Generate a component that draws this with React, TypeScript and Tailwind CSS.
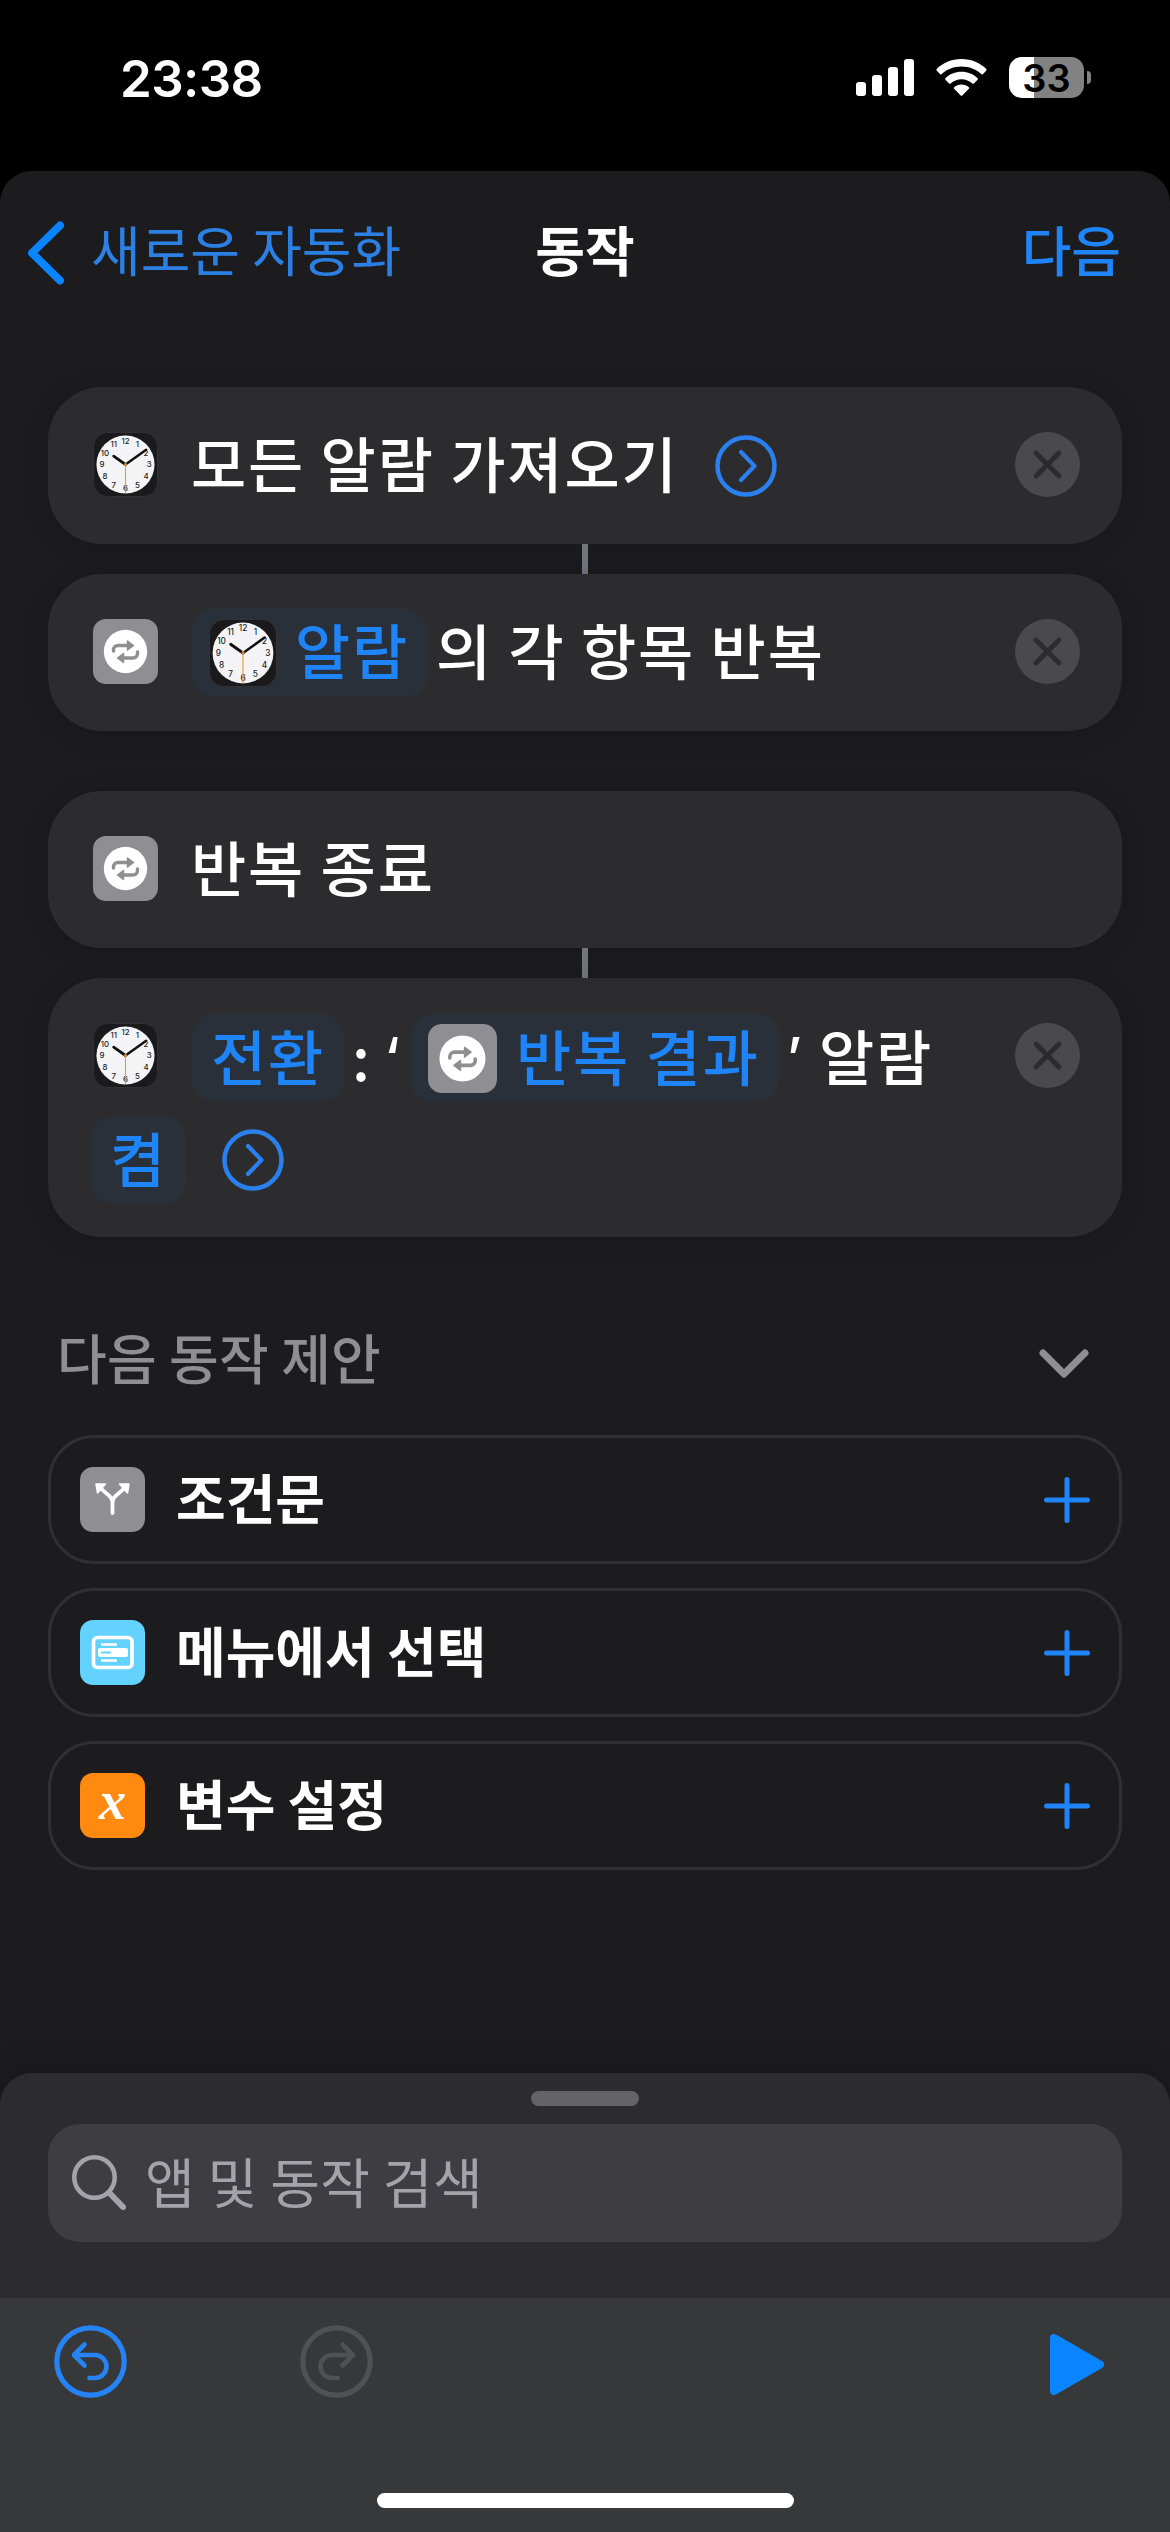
import type { ReactNode } from 'react'

const ClockIcon = ({ className }: { className: string }) => (
  <svg viewBox="0 0 66 66" className={className}>
    <rect x="0.5" y="0.5" width="65" height="65" rx="14" fill="#1a1a1c" stroke="#333335" />
    <circle cx="33" cy="33" r="29.5" fill="#f4f4f6" />
    {[12, 1, 2, 3, 4, 5, 6, 7, 8, 9, 10, 11].map((hour) => {
      const angle = (hour * Math.PI) / 6
      return (
        <text
          key={hour}
          x={33 + Math.sin(angle) * 24}
          y={33 - Math.cos(angle) * 24 + 2.9}
          fontSize="8"
          fontWeight="500"
          textAnchor="middle"
          letterSpacing="0"
          fill="#1c1c1e"
          fontFamily="Inter, sans-serif"
        >
          {hour}
        </text>
      )
    })}
    <path d="M33 33 L21 24.5" stroke="#111" strokeWidth="2.8" strokeLinecap="round" />
    <path d="M33 33 L54 18" stroke="#111" strokeWidth="2.5" strokeLinecap="round" />
    <path d="M33 31 V62" stroke="#f0992e" strokeWidth="1.1" />
    <circle cx="33" cy="33" r="1.6" fill="#c98a3a" />
  </svg>
)

const RepeatIcon = ({ className }: { className: string }) => (
  <svg viewBox="0 0 65 65" className={className}>
    <rect width="65" height="65" rx="13" fill="#8e8e93" />
    <circle cx="32.5" cy="32.5" r="21.7" fill="#fff" />
    <g fill="none" stroke="#8e8e93" strokeWidth="3.4" strokeLinecap="round" strokeLinejoin="round">
      <path d="M20.500 32 V31 a4.500 4.500 0 0 1 4.500 -4.500 H35" />
      <path d="M44.500 33 V34.500 a4.500 4.500 0 0 1 -4.500 4.500 H30" />
    </g>
    <path d="M34.500 22 L40.500 26.500 L34.500 31 Z" fill="#8e8e93" stroke="#8e8e93" strokeWidth="1.5" strokeLinejoin="round" />
    <path d="M30.500 34.500 L24.500 39 L30.500 43.500 Z" fill="#8e8e93" stroke="#8e8e93" strokeWidth="1.5" strokeLinejoin="round" />
  </svg>
)

const BranchIcon = () => (
  <svg viewBox="0 0 65 65" className="size-[65px]">
    <rect width="65" height="65" rx="13" fill="#8e8e93" />
    <path d="M32.500 46 V36 C32.500 29 27 28 21 21.500 M32.500 36 C32.500 29 38 28 44 21.500" fill="none" stroke="#fff" strokeWidth="3.800" strokeLinecap="round" />
    <path d="M16 17 L25.500 17 L17.500 26 Z M49 17 L39.500 17 L47.500 26 Z" fill="#fff" stroke="#fff" strokeWidth="1.5" strokeLinejoin="round" />
  </svg>
)

const MenuIcon = () => (
  <svg viewBox="0 0 65 65" className="size-[65px]">
    <rect width="65" height="65" rx="13" fill="#64d2ff" />
    <rect x="13.5" y="17.5" width="38.5" height="30" rx="4" fill="none" stroke="#fff" strokeWidth="3.6" />
    <path d="M22 24.500 H36 M22 40.500 H36" stroke="#fff" strokeWidth="2.4" strokeLinecap="round" />
    <rect x="18" y="28" width="30" height="9" rx="2" fill="#fff" />
    <path d="M22 32.500 H30" stroke="#64d2ff" strokeWidth="2" strokeLinecap="round" />
  </svg>
)

const VariableIcon = () => (
  <div className="flex size-[65px] items-center justify-center rounded-[13px] bg-[#ff8a0f]">
    <span className="-mt-[9px] font-['Liberation_Serif',serif] text-[54px] leading-none font-bold text-white italic">x</span>
  </div>
)

const DisclosureIcon = ({ className }: { className: string }) => (
  <svg viewBox="0 0 62 62" className={`size-[62px] ${className}`} fill="none" stroke="#2a80ee" strokeLinecap="round" strokeLinejoin="round">
    <circle cx="31" cy="31" r="28.5" strokeWidth="4.5" />
    <path d="M26 17 L39.500 31 L26 45" strokeWidth="4.2" />
  </svg>
)

const DeleteButton = () => (
  <svg viewBox="0 0 65 65" className="size-[65px] shrink-0">
    <circle cx="32.5" cy="32.5" r="32.5" fill="#4a4a4e" />
    <path d="M21 21 L44 44 M44 21 L21 44" stroke="#2c2c2e" strokeWidth="4.8" strokeLinecap="round" />
  </svg>
)

const Connector = () => <div className="mx-auto h-[30px] w-[6px] bg-[#747480]" />

// Line boxes sit low for hangul, the bottom padding pulls the glyphs back to the row's centre
const Label = ({ children, className = '' }: { children: ReactNode; className?: string }) => (
  <span className={`pb-[7px] font-medium ${className}`}>{children}</span>
)

const Quote = ({ children }: { children: ReactNode }) => (
  <span className="flex w-[30px] justify-center font-[Inter,sans-serif] text-[56px] font-medium tracking-normal">{children}</span>
)

const Token = ({ children, className = '' }: { children: ReactNode; className?: string }) => (
  <span className={`flex h-[88px] items-center rounded-[22px] bg-[#29303a] text-[#1f84f8] ${className}`}>
    {children}
  </span>
)

const Card = ({ children, className = '' }: { children: ReactNode; className?: string }) => (
  <div className={`rounded-[54px] bg-[#2c2c2e] pr-[42px] pl-[45px] text-[60px] leading-none tracking-[1.9px] shadow-[0_4px_24px_rgba(0,0,0,0.15)] ${className}`}>
    {children}
  </div>
)

const suggestions = [
  { label: '조건문', icon: <BranchIcon /> },
  { label: '메뉴에서 선택', icon: <MenuIcon /> },
  { label: '변수 설정', icon: <VariableIcon /> },
]

function StatusBar() {
  return (
    <div className="flex h-[171px] items-start pt-[57px] font-[Inter,sans-serif]">
      <div className="ml-[120px] flex h-[43px] w-[150px] items-center text-[51px] leading-none font-semibold tracking-[-0.6px]">23:38</div>
      <svg viewBox="0 0 58 38" className="mt-[2px] ml-[586px] h-[38px] w-[58px]" fill="#fff">
        <rect x="0" y="23" width="10" height="14" rx="3" />
        <rect x="16" y="16" width="10" height="21" rx="3" />
        <rect x="32" y="8" width="10" height="29" rx="3" />
        <rect x="48" y="0" width="10" height="37" rx="3" />
      </svg>
      <svg viewBox="0 0 51 38" className="mt-[2px] ml-[22px] h-[38px] w-[51px]" fill="#fff">
        <path d="M25.5 0 C35.5 0 44.5 4 50.3 10 Q51 10.900 50.200 11.700 L46.800 15.200 Q46 15.900 45.200 15.100 C40 10.300 33 7.600 25.500 7.600 S11 10.300 5.800 15.100 Q5 15.900 4.200 15.200 L0.800 11.700 Q0 10.900 0.700 10 C6.500 4 15.500 0 25.500 0 Z" />
        <path d="M25.500 12.800 C31.800 12.800 37.500 15.200 41.600 19.200 Q42.400 20 41.600 20.800 L37.900 24.500 Q37.200 25.200 36.400 24.500 C33.500 21.900 29.700 20.300 25.500 20.300 S17.500 21.900 14.600 24.500 Q13.800 25.200 13.100 24.500 L9.400 20.800 Q8.600 20 9.400 19.200 C13.500 15.200 19.200 12.800 25.500 12.800 Z" />
        <path d="M25.500 25.600 C28.300 25.600 30.900 26.600 32.800 28.200 Q33.700 29 32.900 29.800 L26.300 36.600 Q25.500 37.400 24.700 36.600 L18.100 29.800 Q17.300 29 18.200 28.200 C20.100 26.600 22.700 25.600 25.500 25.600 Z" />
      </svg>
      <div className="ml-[22px] flex h-[41px] w-[75px] items-center justify-center rounded-[13px] bg-[linear-gradient(90deg,#fff_33%,#828282_33%)] text-[38px] leading-none font-semibold text-black">
        33
      </div>
      <div className="mt-[14px] ml-[3px] h-[13px] w-[4px] rounded-r-full bg-[#828282]" />
    </div>
  )
}

function NavBar() {
  return (
    <div className="flex h-[162px] items-center justify-between pt-1 text-[54px] leading-none">
      <div className="flex w-[500px] items-center text-[#2c80e4]">
        <svg viewBox="0 0 38 64" className="-mt-[2px] ml-[27px] h-[64px] w-[38px]" fill="none" stroke="#0a84ff" strokeWidth="8" strokeLinecap="round" strokeLinejoin="round">
          <path d="M33 4.500 L5 32 L33 59.500" />
        </svg>
        <span className="ml-[26px] pb-[11px]">새로운 자동화</span>
      </div>
      <span className="pb-[11px] font-bold">동작</span>
      <span className="w-[500px] pr-[49px] pb-[11px] text-right font-medium text-[#1f84f8]">다음</span>
    </div>
  )
}

export default function App() {
  return (
    <div className="flex h-[2532px] w-[1170px] flex-col overflow-hidden bg-black font-['Noto_Sans_CJK_KR',sans-serif] whitespace-nowrap text-white">
      <StatusBar />
      <div className="flex grow flex-col rounded-t-[32px] bg-[#1c1c1e]">
        <NavBar />

        <div className="mx-12 mt-[54px]">
          <Card className="flex h-[157px] items-center">
            <ClockIcon className="-mt-[2px] size-[65px]" />
            <Label className="ml-[33px]">모든 알람 가져오기</Label>
            <DisclosureIcon className="ml-[36px]" />
            <div className="-mt-[2px] ml-auto">
              <DeleteButton />
            </div>
          </Card>
          <Connector />
          <Card className="flex h-[157px] items-center">
            <RepeatIcon className="-mt-[2px] size-[65px]" />
            <Token className="ml-[34px] w-[236px] pl-[17px]">
              <ClockIcon className="size-[68px]" />
              <Label className="ml-[18px]">알람</Label>
            </Token>
            <Label className="ml-[8px]">의 각 항목 반복</Label>
            <div className="-mt-[2px] ml-auto">
              <DeleteButton />
            </div>
          </Card>
          <Card className="mt-[60px] flex h-[157px] items-center">
            <RepeatIcon className="-mt-[2px] size-[65px]" />
            <Label className="ml-[33px]">반복 종료</Label>
          </Card>
          <Connector />
          <Card className="h-[259px] pt-[36px]">
            <div className="flex h-[88px] items-center">
              <ClockIcon className="-mt-[5px] size-[65px]" />
              <Token className="ml-[34px] w-[152px] justify-center">
                <Label>전환</Label>
              </Token>
              <Label className="ml-[3px] w-[30px] text-center">:</Label>
              <Quote>‘</Quote>
              <Token className="ml-[4px] w-[368px] pl-[17px]">
                <RepeatIcon className="size-[69px]" />
                <Label className="ml-[19px]">반복 결과</Label>
              </Token>
              <Quote>’</Quote>
              <Label className="ml-[10px]">알람</Label>
              <div className="-mt-[5px] ml-auto">
                <DeleteButton />
              </div>
            </div>
            <div className="mt-[14px] flex h-[88px] items-center">
              <Token className="-ml-[2px] w-[95px] justify-center">
                <Label>켬</Label>
              </Token>
              <DisclosureIcon className="ml-[36px]" />
            </div>
          </Card>
        </div>

        <div className="mx-12 mt-[90px] flex h-[66px] items-center justify-between pr-[33px] pl-[9px] text-[#8e8e93]">
          <span className="pb-[7px] text-[54px] leading-none font-medium tracking-[0.2px]">다음 동작 제안</span>
          <svg viewBox="0 0 50 30" className="mt-[8px] h-[30px] w-[50px]" fill="none" stroke="#8e8e93" strokeWidth="7" strokeLinecap="round" strokeLinejoin="round">
            <path d="M4 4 L25 25 L46 4" />
          </svg>
        </div>

        <div className="mx-12 mt-[42px] flex flex-col gap-[24px]">
          {suggestions.map(({ label, icon }) => (
            <div key={label} className="flex h-[129px] items-center rounded-[46px] border-[3px] border-[#303032] pr-[29px] pl-[29px]">
              {icon}
              <span className="ml-[31px] pb-[5px] text-[54px] leading-none font-bold">{label}</span>
              <svg viewBox="0 0 46 46" className="ml-auto size-[46px]" fill="none" stroke="#1f84f8" strokeWidth="5" strokeLinecap="round">
                <path d="M23 2.500 V43.500 M2.500 23 H43.500" />
              </svg>
            </div>
          ))}
        </div>

        {/* Action search drawer */}
        <div className="mt-auto h-[225px] rounded-t-[32px] bg-[#2c2c2e] px-12 pt-[18px] shadow-[0_-4px_30px_rgba(0,0,0,0.2)]">
          <div className="mx-auto h-[15px] w-[108px] rounded-full bg-[#646468]" />
          <div className="mt-[18px] flex h-[118px] items-center rounded-[32px] bg-[#3e3d41] pl-[24px] text-[#a4a3ac]">
            <svg viewBox="0 0 54 55" className="-mt-[2px] h-[55px] w-[54px]" fill="none" stroke="#a4a3ac" strokeLinecap="round">
              <circle cx="22.500" cy="22.500" r="20.200" strokeWidth="4.600" />
              <path d="M37.500 38 L51 52" strokeWidth="6" />
            </svg>
            <span className="ml-[19px] pb-[5px] text-[54px] leading-none tracking-[0.4px]">앱 및 동작 검색</span>
          </div>
        </div>

        {/* Toolbar */}
        <div className="flex h-[234px] flex-col bg-[#373839]">
          <div className="flex h-[195px] items-start px-[54px] pt-[27px]">
            <svg viewBox="0 0 73 73" className="size-[73px]" fill="none" stroke="#2583f4" strokeLinecap="round" strokeLinejoin="round">
              <circle cx="36.500" cy="36.500" r="33.700" strokeWidth="5.200" />
              <path d="M30.500 19.500 L20 30 L30.500 40.500 M20.500 30 H41 a11.500 11.500 0 0 1 0 23 H35.500" strokeWidth="4.600" />
            </svg>
            <svg viewBox="0 0 73 73" className="ml-[173px] size-[73px]" fill="none" stroke="#505152" strokeLinecap="round" strokeLinejoin="round">
              <circle cx="36.500" cy="36.500" r="33.700" strokeWidth="5.200" />
              <path d="M42.500 19.500 L53 30 L42.500 40.500 M52.500 30 H32 a11.500 11.500 0 0 0 0 23 H37.500" strokeWidth="4.600" />
            </svg>
            <svg viewBox="0 0 54 61" className="mt-[9px] mr-[12px] ml-auto h-[61px] w-[54px]">
              <path d="M4 4 L50 30.500 L4 57 Z" fill="#0a84ff" stroke="#0a84ff" strokeWidth="8" strokeLinejoin="round" />
            </svg>
          </div>
          <div className="mx-auto h-[15px] w-[417px] rounded-full bg-white" />
        </div>
      </div>
    </div>
  )
}
